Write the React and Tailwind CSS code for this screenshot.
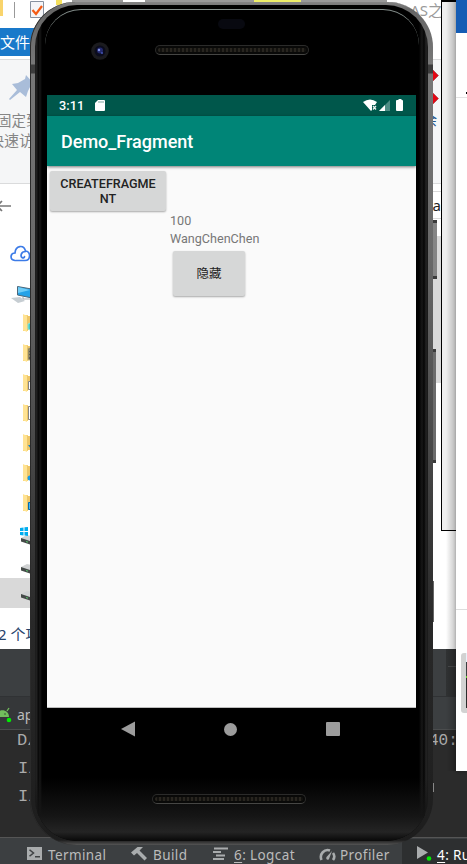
import React from "react";

const cjk = "font-['Noto_Sans','Noto_Sans_CJK_SC',sans-serif]";

function Folder({ mark }) {
  return (
    <svg className="ml-[23px] block h-[30px] w-[18px] shrink-0" viewBox="0 0 18 30">
      <path d="M0 6h5v16H0z" fill="#f8d775" />
      <path d="M4 7h14v14H4z" fill="#edc668" />
      <path d="M0 5l4 2v16l-4-2z" fill="#ffe394" />
      {mark === "cube" && <path d="M5 15l4-2v9l-4-2z" fill="#43c8c5" stroke="#8fe7df" />}
      {mark === "film" && <path d="M5 9h6v12H5zm1 2h1m-1 3h1m-1 3h1" fill="#5b5b57" stroke="#c9b774" />}
      {mark === "page" && <path d="M5.500 12.500h6v8h-6z" fill="#fff" stroke="#858585" />}
      {mark === "doc" && <path d="M5.500 7.500h6v13h-6z" fill="#fff" stroke="#858585" />}
      {mark === "down" && <path d="M5 16h6l-3 4z" fill="#1585cf" />}
      {mark === "note" && <circle cx="7" cy="19" r="2.500" fill="#159ce9" />}
      {mark === "desk" && <path d="M5.500 13.500h6v7h-6z" fill="#49b8ed" stroke="#006bb3" />}
    </svg>
  );
}

function Drive({ windows }) {
  return (
    <svg className="ml-[20px] block h-[30px] w-[20px] shrink-0" viewBox="0 0 20 30">
      <path d="M1 16l6-3 13 3v5l-10 1z" fill="#d0d2d3" />
      <path d="M1 16l9 3v3.500l-9-3z" fill="#444947" />
      <path d="M6 19.500l2 .7" stroke="#58c66b" />
      {windows && <path d="M0 6l3.500-.5v3.500H0zM4.500 5.300L8 5v4H4.500zM0 10h3.500v3.500L0 13zM4.500 10H8v4l-3.500-.4z" fill="#00adef" />}
    </svg>
  );
}

function Explorer() {
  return (
    <div className={`absolute left-0 top-0 flex h-[649px] w-[441px] flex-col bg-white ${cjk}`}>
      <div className="flex h-[28px] shrink-0 items-start justify-between">
        <div className="flex items-start">
          <div className="h-[16px] w-[3px] bg-[#f9d46c]" />
          <div className="ml-[11px] mt-[2px] h-[16px] w-px bg-[#999]" />
          <svg className="ml-[15px] mt-[1px] block h-[18px] w-[15px]" viewBox="0 0 15 18">
            <path d="M.5.5h13v16H.5z" fill="#f4f5f8" stroke="#8791a0" />
            <path d="M2.500 9l3.500 4 6-8" fill="none" stroke="#f45b15" strokeWidth="2.200" />
          </svg>
          <div className="ml-[11px] h-[5px] w-[6px] bg-[#f5e05d]" />
          <div className="ml-[10px] h-[6px] w-[51px] bg-[#999]" />
          <div className="ml-[22px] h-[6px] w-[109px] bg-[#999]" />
          <div className="h-[2px] w-[47px] bg-[#eeee69]" />
          <div className="h-[6px] w-[86px] bg-[#999]" />
        </div>
        <div className="-mr-[2px] whitespace-nowrap text-[15px] leading-[20px] text-[#9a9a9a]">AS之</div>
      </div>
      <div className="flex h-[28px] w-[200px] shrink-0 items-center bg-[#1979ca] text-[15px] text-white">文件</div>
      <div className="mt-[3px] flex h-[125px] shrink-0 justify-between border-y border-[#dadbdc] bg-[#f5f6f7]">
        <div className="flex flex-col">
          <svg className="ml-[9px] mt-[14px] block h-[27px] w-[26px]" viewBox="0 0 26 27">
            <path d="M17 1l8 9-3 1-3 6-2 6-6-5-10 8-1-1 8-9-5-6 6-1 7-4z" fill="#a9bdd9" />
          </svg>
          <div className="-ml-[3px] mt-[9px] whitespace-nowrap text-[14.500px] leading-[20px] text-[#858585]">固定到</div>
          <div className="-ml-[11px] whitespace-nowrap text-[15px] leading-[20px] text-[#858585]">快速访问</div>
        </div>
        <div className="flex w-[16px] flex-col">
          <svg className="mt-[8px] block h-[38px] w-[16px]" viewBox="0 0 16 38">
            <path d="M7 1l6.500 6.500L7 14zM7 24l6.500 6.500L7 37z" fill="#e30613" stroke="#8f2831" strokeWidth=".5" />
          </svg>
          <div className="-ml-[2px] mt-[4px] text-[14px] leading-[20px] text-[#26588f]">余</div>
        </div>
      </div>
      <div className="flex h-[52px] shrink-0 justify-between">
        <svg className="mt-[15px] block h-[14px] w-[12px]" viewBox="0 0 12 14">
          <path d="M11 7H-1M2 2l-5 5 5 5" fill="none" stroke="#777" strokeWidth="1.700" />
        </svg>
        <div className="mt-[7px] flex h-[28px] w-[20px] items-center justify-end border-y border-[#d9d9d9] text-[15px] text-[#222]">a</div>
      </div>
      <div className="flex h-[372px] shrink-0 justify-between">
        <div className="flex w-[40px] flex-col">
          <svg className="ml-[10px] mt-[9px] block h-[18px] w-[22px] shrink-0" viewBox="0 0 22 18">
            <path d="M5 15.500C-.500 15 0 8 5 8 5.500 0 14-.500 15.500 6c5.500 0 5.500 9.500-.5 9.500H6M15.500 6.500c-5 0-5 5-3.500 6s2.500 0 2.500-1" fill="none" stroke="#3c7be7" strokeWidth="1.700" strokeLinecap="round" />
          </svg>
          <svg className="ml-[10px] mt-[22px] block h-[19px] w-[24px] shrink-0" viewBox="0 0 24 19">
            <path d="M7.500 1.500l17 3v9l-17-3.500z" fill="#24a2e8" stroke="#4c6678" />
            <path d="M8 2l12 3-12 3z" fill="#6fcdf7" />
            <path d="M1 13l9-1 5 4-7 2z" fill="#c6cdd2" />
            <path d="M13 12v2h7" stroke="#9da5ac" fill="none" />
          </svg>
          <div className="mt-[5px] flex flex-col">
            <Folder mark="cube" />
            <Folder mark="film" />
            <Folder mark="page" />
            <Folder mark="doc" />
            <Folder mark="down" />
            <Folder mark="note" />
            <Folder mark="desk" />
          </div>
          <div className="mt-[3px] flex flex-col">
            <Drive windows />
            <div className="mt-[-1px]"><Drive /></div>
            <div className="mt-[-3px] bg-[#d9d9d9]"><Drive /></div>
          </div>
        </div>
        <div className="h-[147px] w-[20px] bg-[#d9d9d9]" />
      </div>
      <div className="flex flex-1 items-center whitespace-nowrap pt-[11px] text-[15px] text-[#26426b]">
        <span className="-ml-[2px]">2 个项目</span>
      </div>
    </div>
  );
}

function Ide() {
  return (
    <div className="absolute left-0 top-[649px] flex h-[215px] w-[467px] flex-col overflow-hidden bg-[#2b2b2b] font-['Noto_Sans',sans-serif]">
      <div className="flex h-[48px] shrink-0 justify-end border-b border-[#303234] bg-[#3c3f41]">
        <div className="w-[21px] bg-[#303233] pt-[17px]"><div className="ml-[2px] h-px bg-[#484a4b]" /></div>
      </div>
      <div className="flex h-[33px] shrink-0 items-center border-b border-[#4b4d4e] bg-[linear-gradient(90deg,#353739_50%,#3c3f41_50%)]">
        <svg className="mt-[2px] block h-[18px] w-[13px]" viewBox="0 0 13 18">
          <path d="M-4 12c0-9 13-9 13 0z" fill="#72bd5d" />
          <path d="M7 6l2-3" stroke="#72bd5d" strokeWidth="1.300" />
          <circle cx="5" cy="9" r=".8" fill="#344d30" />
          <circle cx="9" cy="15" r="2.300" fill="#00ed00" />
        </svg>
        <span className="ml-[4px] mt-[2px] text-[14px] text-[#bbb]">app</span>
      </div>
      <div className="flex h-[107px] shrink-0 justify-between text-[#aaa]">
        <div className="-mt-[3px] flex flex-col pl-[17px] font-['Liberation_Mono',monospace] text-[17px] leading-[28px]">
          <span>D/</span><span className="pl-[1px]">I/</span><span className="pl-[1px]">I/</span>
        </div>
        <span className="-mt-[3px] w-[38px] font-['Liberation_Mono',monospace] text-[16px] leading-[28px]">40:</span>
      </div>
      <div className="flex h-[27px] shrink-0 items-center whitespace-nowrap border-t border-[#555] bg-[#3c3f41] pt-[7px] text-[13.500px] leading-[20px] tracking-[.4px] text-[#bbb]">
        <div className="flex w-[104px] shrink-0 items-center pl-[27px]">
          <svg className="-mt-[3px] block h-[13px] w-[15px] shrink-0" viewBox="0 0 15 14" preserveAspectRatio="none">
            <path d="M0 0h15v14H0z" fill="#a9acad" />
            <path d="M2.500 3l4 3.500-4 3.500M8 10.500h5" fill="none" stroke="#404345" strokeWidth="1.600" />
          </svg>
          <span className="ml-[6px]">Terminal</span>
        </div>
        <div className="flex w-[109px] shrink-0 items-center pl-[27px]">
          <svg className="-mt-[2px] block h-[15px] w-[17px] shrink-0" viewBox="0 0 17 15">
            <path d="M0 6.500L6.500 1H12L8.500 4.500 16 12l-2.500 2.500L6 7 3 9.500z" fill="#a9acad" />
          </svg>
          <span className="ml-[5px]">Build</span>
        </div>
        <div className="flex w-[106px] shrink-0 items-center">
          <svg className="-mt-[2px] block h-[13px] w-[15px] shrink-0" viewBox="0 0 15 13">
            <path d="M1 1.500h14M0 5h8M3 8.500h9M0 12h11" stroke="#a9acad" strokeWidth="2" />
          </svg>
          <span className="ml-[6px]"><u className="underline-offset-2">6</u>: Logcat</span>
        </div>
        <div className="flex w-[83px] shrink-0 items-center">
          <svg className="-mt-[1px] block h-[13px] w-[17px] shrink-0" viewBox="0 0 17 13">
            <path d="M2.500 12c-2.500-6 3-11.500 8.500-9.500M14 5c1.500 2 1.500 5 0 7" fill="none" stroke="#a9acad" strokeWidth="2.600" />
            <path d="M13 3L7.500 9c-1 2 1 4 2.500 2z" fill="#a9acad" />
          </svg>
          <span className="ml-[4px]">Profiler</span>
        </div>
        <div className="-mt-[6px] flex h-[26px] flex-1 items-center bg-[#2d2f30] pl-[15px] pt-[6px] text-white">
          <svg className="-mt-[2px] block h-[15px] w-[16px] shrink-0" viewBox="0 0 16 15">
            <path d="M0 0l11 6.500L0 13z" fill="#a9acad" />
            <circle cx="12" cy="12.500" r="2.300" fill="#00ed00" />
          </svg>
          <span className="ml-[4px]"><u className="underline-offset-2">4</u>: Run</span>
        </div>
      </div>
    </div>
  );
}

function SideWindows() {
  return (
    <>
      <div className="absolute left-[441px] top-0 h-[531px] w-[30px] border border-t-2 border-black bg-[#eee]" />
      <div className="absolute left-[446px] top-0 h-[771px] w-[10px] bg-[linear-gradient(90deg,transparent,#0000003b)]" />
      <div className="absolute left-[456px] top-0 flex h-[771px] w-[11px] flex-col bg-white shadow-[0_1px_3px_#0003]">
        <div className="h-[33px] shrink-0 bg-[#155cb4]" />
        <div className="flex h-[65px] shrink-0 items-end justify-end border-b border-[#e3e3e3] pb-[3px]"><div className="h-[2px] w-px bg-black" /></div>
        <div className="h-[512px] shrink-0 border-b border-[#ddd]" />
        <div className="ml-[5px] mt-[43px] flex h-[60px] shrink-0 flex-col items-end rounded-l-[3px] bg-[#d2d2d2]">
          <div className="h-[9px] w-px bg-[#e8f2fa]" />
          <div className="h-[14px] w-px bg-[#3c3f41]" />
          <div className="h-[2px] w-px bg-[#62d12e]" />
          <div className="h-[30px] w-px bg-[#2b2b2b]" />
        </div>
      </div>
    </>
  );
}

function Speaker() {
  return (
    <div className="h-[10px] w-[154px] rounded-full border border-[#2b2b2a] border-b-[#464644] bg-[#090908] p-[2px]">
      <div className="h-full rounded-full bg-[repeating-linear-gradient(90deg,#28251f_0px,#28251f_2px,#13120f_2px,#13120f_4px)]" />
    </div>
  );
}

function StatusBar() {
  return (
    <div className="flex h-[21px] shrink-0 items-center bg-[#00574b] pl-[12px] pr-[13px] text-white">
      <span className="text-[12.700px] font-medium leading-[20px] tracking-[.1px]">3:11</span>
      <svg className="ml-[11px] block h-[11px] w-[10px]" viewBox="0 0 10 11">
        <path d="M3 0h6q1 0 1 1v9q0 1-1 1H1q-1 0-1-1V3z" fill="#fff" />
        <path d="M4 1v2m2-2v2m2-2v2" stroke="#5d8f88" strokeWidth=".8" />
      </svg>
      <div className="flex-1" />
      <svg className="-mt-[1px] block h-[12px] w-[40px]" viewBox="0 0 40 12">
        <path d="M0 3q7-5 14 0L12 6H9v5L8 12z" fill="#fff" />
        <path d="M10 7l3 3.500m0-3.500L10 10.500" stroke="#e8f1ef" strokeWidth="1.300" />
        <path d="M27 1v11H16z" fill="#4f8d85" />
        <path d="M22 6v6h-6z" fill="#fff" />
        <path d="M34 1h1.500V0h3v1H39q1 0 1 1v9q0 1-1 1h-5q-1 0-1-1V2q0-1 1-1z" fill="#fff" />
      </svg>
    </div>
  );
}

function Camera() {
  return (
    <svg className="absolute left-[56px] top-[37px] block h-[18px] w-[18px]" viewBox="0 0 18 18">
      <circle cx="9" cy="9" r="8.800" fill="#1b1b1e" />
      <circle cx="9" cy="9" r="5.500" fill="#0b0c1d" />
      <circle cx="9" cy="8.500" r="3" fill="#23296d" />
      <circle cx="8" cy="8" r="1.200" fill="#8493e4" />
      <circle cx="11" cy="11" r="1" fill="#4455b6" />
    </svg>
  );
}

function Phone() {
  return (
    <>
      <div className="absolute left-[433px] top-[220px] flex w-[4px] flex-col">
        <div className="h-[59px] w-[4px] border-y-[3px] border-[#3b3b3b] bg-[#858585]" />
        <div className="mt-[70px] h-[114px] w-[3px] border-y-[3px] border-[#3b3b3b] bg-[#6c6c6c]" />
        <div className="mt-[118px] h-[41px] w-px bg-[#666]" />
        <div className="mt-[161px] h-[9px] w-px bg-[#888]" />
      </div>
      <div className="absolute left-[30px] top-[2px] h-[843px] w-[403px] rounded-t-[45px] rounded-b-[46px] bg-[linear-gradient(180deg,#858585_0px,#666_8px,#777_62px,#3c3c3c_63px,#3c3c3c_71px,#777_72px,#686868_260px,#444_470px,#292929_620px,#1d1d1d_838px,#555_843px)] px-[5px] pb-[4px] pt-[3px] font-['Roboto',sans-serif] shadow-[inset_1px_0_0_#2b2b2b]">
        <div className="flex h-full flex-col overflow-hidden rounded-t-[42px] rounded-b-[42px] bg-[linear-gradient(90deg,#1b1b1b_0px,#222_2px,#060606_3px,#171717_5px,#000_7px,#000_384px,#171717_387px,#050505_389px,#242424_391px,#181818_393px)]">
          <div className="relative flex h-[90px] shrink-0 flex-col items-center pt-[4px]">
            <div className="flex h-[40px] w-[374px] shrink-0 flex-col items-center rounded-t-[36px] border-t border-[#87918e] pt-[9px]">
              <div className="h-[10px] w-[27px] rounded-full bg-[#080910]" />
            </div>
            <div className="-mt-[4px]"><Speaker /></div>
            <Camera />
          </div>
          <div className="ml-[12px] flex h-[613px] w-[369px] shrink-0 flex-col border-b border-[#bcbcbc] bg-[#fafafa]">
            <StatusBar />
            <div className="flex h-[50px] shrink-0 items-center bg-[#008577] pl-[14px] pt-[1px] text-[18px] font-medium text-white shadow-[0_1px_3px_#0008]">Demo_Fragment</div>
            <div className="flex items-start pl-[3px] pt-[5px]">
              <div className="flex h-[40px] w-[116px] shrink-0 items-center justify-center rounded-[2px] bg-[#d6d7d7] text-center text-[12.600px] font-medium leading-[14.500px] text-[#222] shadow-[0_1px_2px_#0005]"><span className="pt-[1px]">CREATEFRAGME<br />NT</span></div>
              <div className="ml-[4px] flex flex-col pt-[41px] text-[12.600px] leading-[18px] text-[#777]">
                <span>100</span>
                <span>WangChenChen</span>
                <div className="ml-[3px] mt-[3px] flex h-[45px] w-[72px] items-center justify-center rounded-[2px] bg-[#d6d7d7] pb-[1px] font-['Noto_Sans_CJK_SC',sans-serif] text-[12.500px] text-[#222] shadow-[0_1px_2px_#0005]">隐藏</div>
              </div>
            </div>
          </div>
          <div className="flex flex-1 flex-col items-center bg-[linear-gradient(180deg,transparent_0px,transparent_70px,#151515_108px,#242424_124px,#0b0b0b_132px)]">
            <div className="flex w-full items-center pl-[86px] pt-[13px]">
              <svg className="block h-[16px] w-[14px]" viewBox="0 0 14 16"><path d="M0 8L14 .5v15z" fill="#9c9c9c" /></svg>
              <div className="ml-[89px] h-[13px] w-[13px] rounded-full bg-[#9c9c9c]" />
              <div className="ml-[89px] h-[14px] w-[14px] rounded-[1px] bg-[#9c9c9c]" />
            </div>
            <div className="mr-[6px] mt-[57px]"><Speaker /></div>
          </div>
        </div>
      </div>
    </>
  );
}

export default function App() {
  return (
    <main className="relative h-[864px] w-[467px] overflow-hidden bg-white">
      <Explorer />
      <Ide />
      <SideWindows />
      <Phone />
    </main>
  );
}
